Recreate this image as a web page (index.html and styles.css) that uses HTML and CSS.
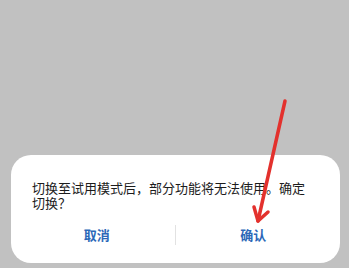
FILE: index.html
```html
<!DOCTYPE html>
<html lang="zh-CN">
<head>
<meta charset="utf-8">
<link rel="stylesheet" href="styles.css">
</head>
<body>
<div class="screen">
  <div class="dialog">
    <p class="message">切换至试用模式后，部分功能将无法使用。确定切换？</p>
    <div class="actions">
      <div class="btn">取消</div>
      <div class="divider"></div>
      <div class="btn">确认</div>
    </div>
  </div>
  <svg class="arrow" width="349" height="268" viewBox="0 0 349 268">
    <g fill="none" stroke="#e3312d" stroke-width="3.5" stroke-linecap="round" stroke-linejoin="round">
      <line x1="285" y1="101" x2="258" y2="221"/>
      <polyline points="254,207 258,221 268,212"/>
    </g>
  </svg>
</div>
</body>
</html>
```
FILE: styles.css
```css
html, body {
  margin: 0;
  padding: 0;
}
body {
  background: #c1c1c1;
  font-family: "Noto Sans CJK SC", "Noto Sans", sans-serif;
}
.screen {
  position: relative;
  width: 349px;
  height: 268px;
  overflow: hidden;
  padding-top: 155px;
  box-sizing: border-box;
}
.dialog {
  margin-left: 11px;
  width: 329px;
  height: 108px;
  background: #fff;
  border-radius: 20px;
  box-sizing: border-box;
  padding: 25px 28px 0 21px;
}
.message {
  margin: 0;
  font-size: 13px;
  line-height: 15px;
  color: #1c1c1c;
}
.actions {
  display: flex;
  align-items: center;
  margin-top: 15px;
  margin-left: -13px;
  margin-right: -19px;
  height: 20px;
}
.btn {
  flex: 1;
  text-align: center;
  font-size: 13px;
  font-weight: bold;
  color: #2b68b8;
  line-height: 20px;
}
.divider {
  width: 1px;
  height: 20px;
  background: #e2e2e2;
}
.arrow {
  position: absolute;
  left: 0;
  top: 0;
}
```
